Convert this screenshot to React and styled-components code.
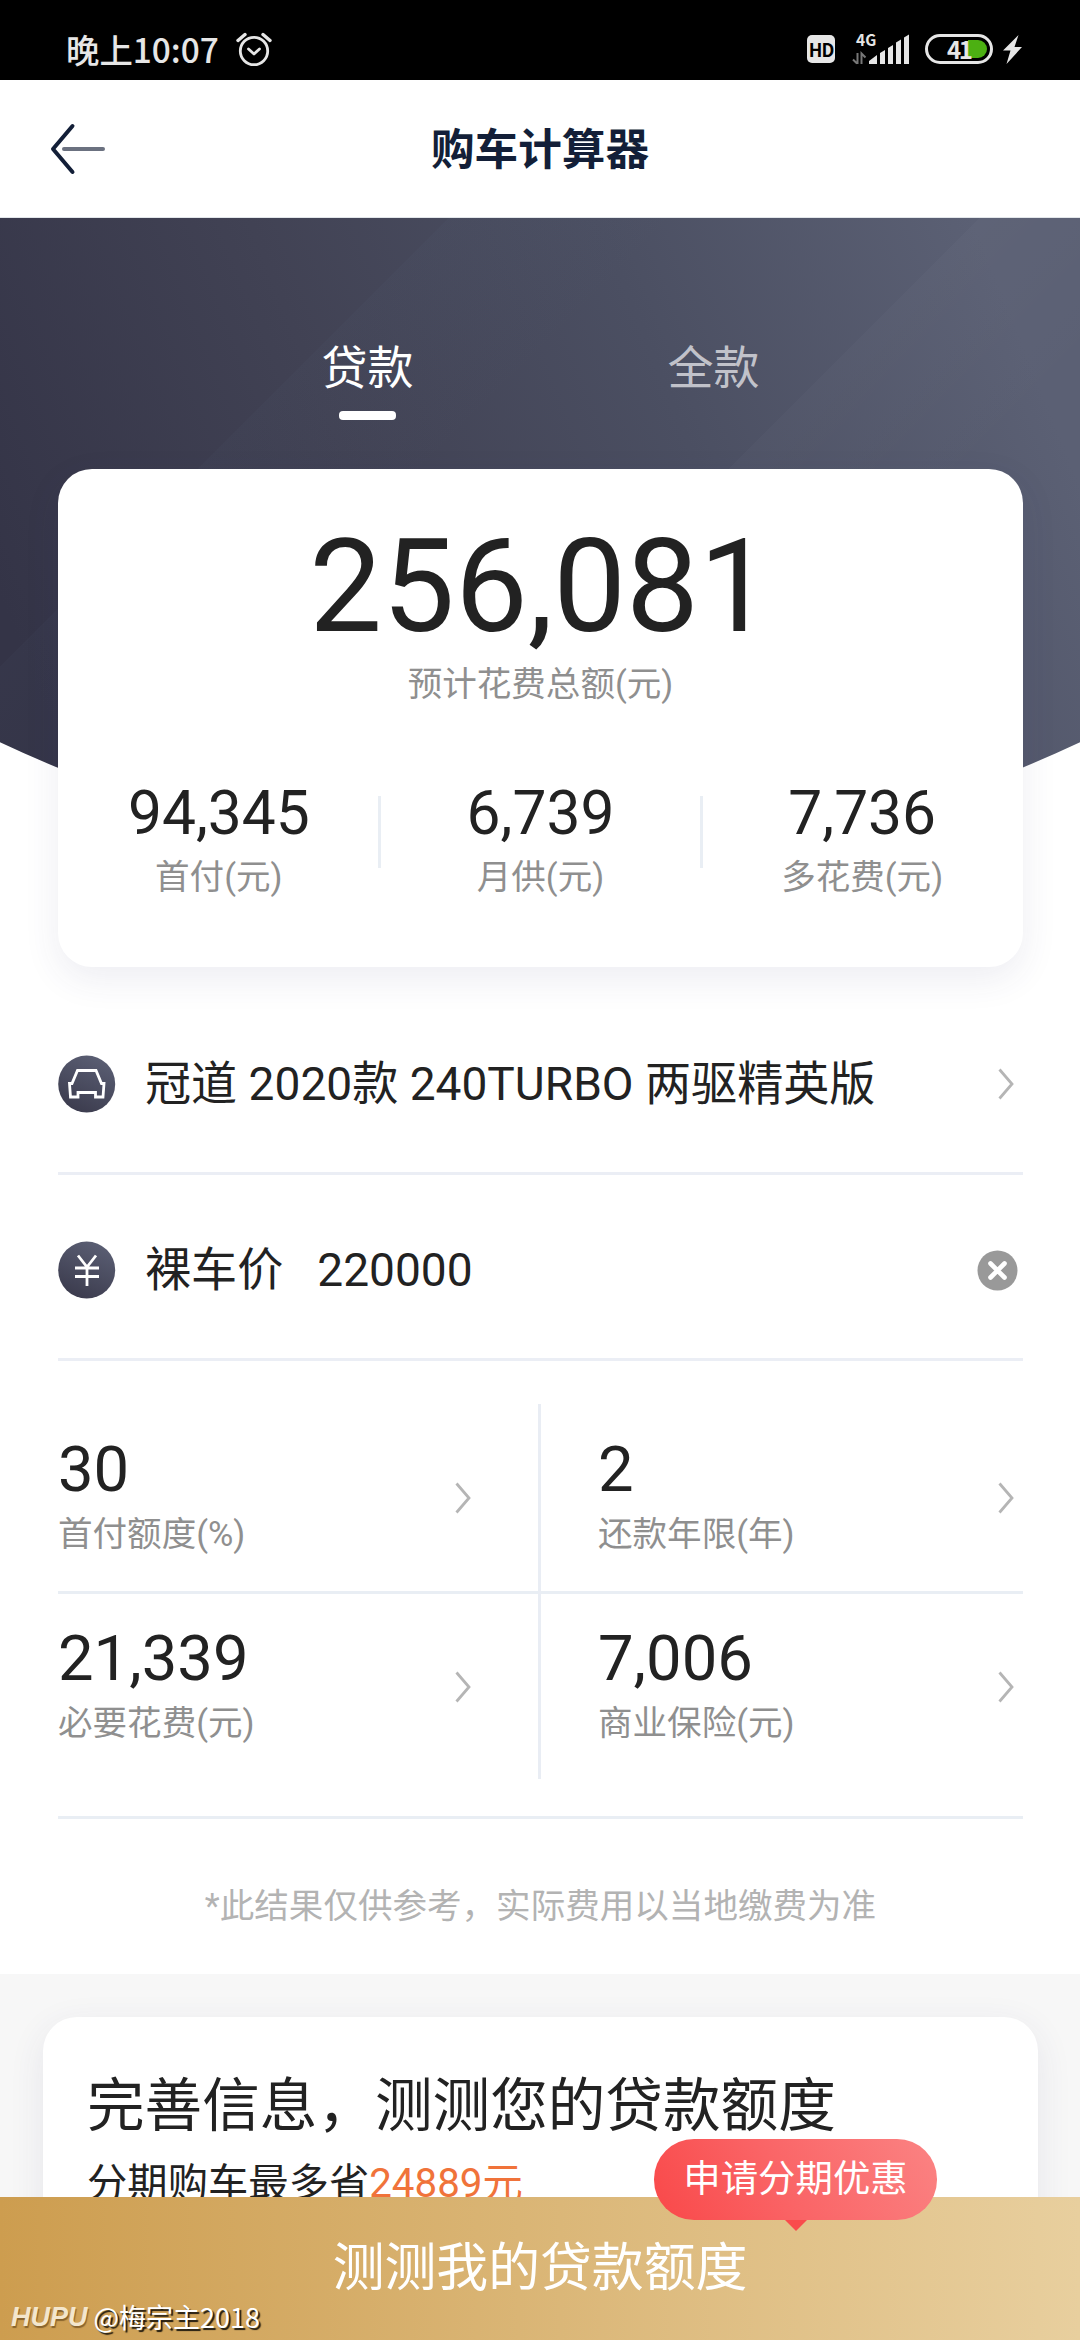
import styled, { createGlobalStyle } from "styled-components";

const GlobalStyle = createGlobalStyle`
  * {
    box-sizing: border-box;
  }
  body {
    margin: 0;
    background: #fff;
    font-family: Roboto, "Noto Sans CJK SC", sans-serif;
    color: #222;
  }
  h1, h2, p {
    margin: 0;
    font-weight: 400;
  }
  svg {
    display: block;
    flex: none;
  }
`;

const Page = styled.main`
  width: 1080px;
  height: 2340px;
  display: flex;
  flex-direction: column;
  overflow: hidden;
  position: relative;
`;

const StatusBar = styled.header`
  height: 80px;
  flex: none;
  background: #000;
  color: #e6e6e6;
  display: flex;
  align-items: center;
  padding: 18px 58px 0 66px;
  font-family: "Noto Sans CJK SC", sans-serif;
  .time {
    font-size: 33.4px;
    font-weight: 500;
    line-height: 40px;
    margin-right: 17px;
  }
  .hd {
    width: 28px;
    height: 28px;
    border-radius: 5px;
    background: #e6e6e6;
    color: #000;
    font-size: 18px;
    font-weight: 700;
    line-height: 28px;
    text-align: center;
    letter-spacing: -1px;
    margin: 0 17px 0 auto;
  }
  .battery {
    width: 68px;
    height: 30px;
    border: 3px solid #e6e6e6;
    border-radius: 15px;
    margin: 0 10px 0 16px;
    padding: 3px;
    display: flex;
    justify-content: flex-end;
    position: relative;
    i {
      width: 19px;
      height: 18px;
      background: #4cb012;
      border-radius: 0 9px 9px 0;
    }
    span {
      position: absolute;
      left: 19px;
      top: -1px;
      font-size: 24px;
      font-weight: 700;
      line-height: 25px;
      letter-spacing: -2.5px;
    }
  }
`;

const NavBar = styled.nav`
  height: 138px;
  flex: none;
  border-bottom: 1px solid #e2e6ea;
  display: grid;
  grid-template-columns: 1fr auto 1fr;
  align-items: center;
  padding: 0 50px;
  h1 {
    color: #131f38;
    font-size: 43.6px;
    line-height: 60px;
    font-weight: 700;
    padding-top: 4px;
  }
`;

const Scroll = styled.div`
  flex: 1;
  min-height: 0;
  overflow: hidden;
`;

const Hero = styled.section`
  position: relative;
  padding: 0 57px 0 58px;
`;

// dark backdrop, cut to an arc at its lower edge
const Backdrop = styled.div`
  position: absolute;
  inset: 0 0 auto 0;
  height: 645px;
  clip-path: circle(1268px at 50% -623px);
  background:
    linear-gradient(135deg, transparent 56.8%, rgba(255, 255, 255, 0.02) 56.8%, transparent 72%),
    linear-gradient(135deg, transparent 26%, rgba(120, 150, 180, 0.03) 26%, transparent 40%),
    linear-gradient(68deg, #343447 8%, #414254 38%, #4b4f62 64%, #5b6074 92%);
`;

const Tabs = styled.div`
  position: relative;
  display: flex;
  justify-content: center;
  height: 251px;
  padding-top: 120px;
`;

const Tab = styled.div`
  width: 346px;
  display: flex;
  flex-direction: column;
  align-items: center;
  gap: 13px;
  font-size: 46px;
  line-height: 60px;
  color: ${(p) => (p.$active ? "#fff" : "#c1c2ca")};
  &::after {
    content: "";
    width: 57px;
    height: 9px;
    border-radius: 4px;
    background: ${(p) => (p.$active ? "#fff" : "transparent")};
  }
`;

const SummaryCard = styled.div`
  position: relative;
  height: 498px;
  border-radius: 34px;
  background: #fff;
  box-shadow: 0 12px 36px rgba(60, 60, 110, 0.09);
  padding-top: 53px;
  .total {
    font-size: 129.6px;
    line-height: 130px;
    text-align: center;
    margin-bottom: 8px;
  }
`;

const Label = styled.p`
  font-size: 34.56px;
  line-height: 48px;
  color: #8f8f8f;
  text-align: ${(p) => (p.$center ? "center" : "left")};
`;

const Stats = styled.div`
  display: flex;
  margin-top: 75px;
`;

const Stat = styled.div`
  flex: 1;
  text-align: center;
  .num {
    font-size: 60.48px;
    line-height: 62px;
    margin-bottom: 8px;
  }
`;

const StatDivider = styled.div`
  width: 3px;
  height: 72px;
  margin: 13px -1.5px 0;
  background: #e9eef4;
`;

const Form = styled.section`
  padding: 22px 57px 0 58px;
`;

const Row = styled.div`
  height: 186px;
  border-bottom: 3px solid #ebeef5;
  padding: 7px ${(p) => (p.$clearable ? 5 : 9)}px 0 0;
  display: flex;
  align-items: center;
  font-size: 46.08px;
  line-height: 60px;
  white-space: pre;
  .title {
    margin-left: 29px;
  }
  .value {
    margin-left: 34px;
  }
  svg:last-child {
    margin-left: auto;
  }
`;

const Grid = styled.div`
  display: grid;
  grid-template-columns: 480px 3px 1fr;
  grid-template-rows: 187px 3px 185px;
  margin: 43px 0 37px;
  .vline {
    grid-area: 1 / 2 / 4 / 3;
    background: #e9edf4;
  }
  .hline {
    grid-area: 2 / 1 / 3 / 4;
    background: #e9eef4;
  }
`;

const Cell = styled.div`
  grid-column: ${(p) => (p.$right ? 3 : 1)};
  grid-row: ${(p) => (p.$bottom ? 3 : 1)};
  display: flex;
  align-items: center;
  justify-content: space-between;
  padding: ${(p) => (p.$right ? "0 9px 0 57px" : "0 67px 0 0")};
  .num {
    font-size: 63.36px;
    line-height: 64px;
    margin-bottom: 9px;
  }
`;

const Note = styled.p`
  height: 158px;
  border-top: 3px solid #e9eef4;
  padding-top: 63px;
  font-size: 34.56px;
  line-height: 48px;
  text-align: center;
  color: #b3b3b3;
`;

const Promo = styled.section`
  background: #f7f7f7;
  padding: 43px 42px 0 43px;
  height: 300px;
  article {
    height: 400px;
    border-radius: 34px;
    background: #fff;
    box-shadow: 0 10px 36px rgba(60, 60, 110, 0.09);
    padding: 55px 44px 0;
  }
  h2 {
    font-size: 57.6px;
    line-height: 70px;
    margin-bottom: 18px;
  }
  p {
    font-size: 40.32px;
    line-height: 48px;
  }
  em {
    font-style: normal;
    color: #f0733a;
  }
`;

const ApplyButton = styled.div`
  position: relative;
  height: 143px;
  flex: none;
  background: linear-gradient(90deg, #cd9d4f, #e8cf9e);
  color: #fff;
  font-size: 51.84px;
  line-height: 64px;
  display: flex;
  align-items: center;
  justify-content: center;
`;

const Badge = styled.div`
  position: absolute;
  left: 654px;
  top: -58px;
  width: 283px;
  height: 81px;
  border-radius: 40px;
  background: linear-gradient(60deg, #f94b4c 5%, #fa6466 45%, #fb8383);
  font-size: 37.44px;
  line-height: 80px;
  text-align: center;
  &::after {
    content: "";
    position: absolute;
    left: 131px;
    top: 81px;
    border: 11px solid transparent;
    border-top-color: #f94b4c;
    border-bottom: 0;
  }
`;

const Watermark = styled.div`
  position: absolute;
  left: 11px;
  bottom: 4px;
  display: flex;
  align-items: center;
  gap: 6px;
  font: 400 27px/38px "Noto Sans CJK SC", sans-serif;
  text-shadow: 2px 2px 1px rgba(0, 0, 0, 0.85);
  b {
    font: italic 700 27px/38px "Liberation Sans", sans-serif;
    color: #f3e6cd;
    text-shadow: 1px 2px 1px rgba(90, 60, 20, 0.6);
  }
`;

const Chevron = () => (
  <svg width="16" height="34" viewBox="0 0 16 34" fill="none">
    <path d="M1.5 2.5 14 17 1.5 31.5" stroke="#b5b5b5" strokeWidth="2.8" />
  </svg>
);

const AlarmIcon = () => (
  <svg width="36" height="36" viewBox="0 0 36 36" fill="none" stroke="#e6e6e6" strokeWidth="2.8" strokeLinecap="round">
    <circle cx="18" cy="20" r="13.7" />
    <path d="m12.5 18 5.5 5 5.5-5" strokeLinejoin="round" />
    <path d="M2 9.5 9 3.5M34 9.5l-7-6" strokeWidth="3.4" />
  </svg>
);

const SignalIcon = () => (
  <svg width="57" height="44" viewBox="0 -6 57 44" fill="#e6e6e6">
    <text x="4" y="12.5" fontSize="15.5" fontWeight="700" fontFamily="Noto Sans CJK SC">4G</text>
    <path d="M5.5 20v11M5 30.5 1 26.5M9.5 31V20.5l4 4" stroke="#777" strokeWidth="2" fill="none" />
    <path d="M17 31v-3l8-6v9zM28 31V20l5-3v14zM36 31V15l5-3v19zM44 31V9.5l5-3V31zM52 31V4.5l5-3V31z" />
  </svg>
);

const BoltIcon = () => (
  <svg width="19" height="30" viewBox="0 0 19 30" fill="#e6e6e6">
    <path d="M15.5 1 0 16.5h7.5L3.5 30 19 13h-7.5z" />
  </svg>
);

const BackIcon = () => (
  <svg width="56" height="52" viewBox="0 0 56 52" fill="none" strokeWidth="4" strokeLinecap="round">
    <path d="M14 26h39" stroke="#6b7180" />
    <path d="M22.5 3 3 26l19.5 23" stroke="#131f38" strokeLinejoin="round" />
  </svg>
);

const RoundIcon = ({ id, d }) => (
  <svg width="58" height="58" viewBox="0 0 58 58" fill="none">
    <defs>
      <linearGradient id={id} x1="0.75" y1="0" x2="0.3" y2="1">
        <stop stopColor="#5b5f74" />
        <stop offset="1" stopColor="#3b3b4d" />
      </linearGradient>
    </defs>
    <circle cx="28.7" cy="29" r="28.5" fill={`url(#${id})`} />
    <path d={d} stroke="#fff" strokeWidth="2.8" />
  </svg>
);

const ClearIcon = () => (
  <svg width="41" height="41" viewBox="0 0 41 41">
    <circle cx="20.5" cy="20.5" r="20" fill="#999" />
    <path d="m13.5 13.5 14 14m0-14-14 14" stroke="#fff" strokeWidth="4.6" strokeLinecap="round" />
  </svg>
);

const stats = [
  { num: "94,345", label: "首付(元)" },
  { num: "6,739", label: "月供(元)" },
  { num: "7,736", label: "多花费(元)" },
];

const cells = [
  { num: "30", label: "首付额度(%)" },
  { num: "2", label: "还款年限(年)", right: true },
  { num: "21,339", label: "必要花费(元)", bottom: true },
  { num: "7,006", label: "商业保险(元)", right: true, bottom: true },
];

const App = () => {
  return (
    <Page>
      <GlobalStyle />
      <StatusBar>
        <span className="time">晚上10:07</span>
        <AlarmIcon />
        <span className="hd">HD</span>
        <SignalIcon />
        <div className="battery">
          <i />
          <span>41</span>
        </div>
        <BoltIcon />
      </StatusBar>
      <NavBar>
        <BackIcon />
        <h1>购车计算器</h1>
      </NavBar>
      <Scroll>
        <Hero>
          <Backdrop />
          <Tabs>
            <Tab $active>贷款</Tab>
            <Tab>全款</Tab>
          </Tabs>
          <SummaryCard>
            <p className="total">256,081</p>
            <Label $center>预计花费总额(元)</Label>
            <Stats>
              {stats.map((s, i) => [
                i > 0 && <StatDivider key={`d${i}`} />,
                <Stat key={s.label}>
                  <p className="num">{s.num}</p>
                  <Label $center>{s.label}</Label>
                </Stat>,
              ])}
            </Stats>
          </SummaryCard>
        </Hero>
        <Form>
          <Row>
            <RoundIcon id="car" d="M19.5 15.5h18.5l5.5 13h2.5L45 42h-7.500v-4.500h-17.500v4.500h-7.500L11.500 28.500h2.500z" />
            <span className="title">冠道 2020款 240TURBO 两驱精英版</span>
            <Chevron />
          </Row>
          <Row $clearable>
            <RoundIcon id="yen" d="M20 14.500 29 26l9-11.500M29 26v19M17 27h24M17 35.500h24" />
            <span className="title">裸车价</span>
            <span className="value">220000</span>
            <ClearIcon />
          </Row>
          <Grid>
            <div className="hline" />
            <div className="vline" />
            {cells.map((c) => (
              <Cell key={c.label} $right={c.right} $bottom={c.bottom}>
                <div>
                  <p className="num">{c.num}</p>
                  <Label>{c.label}</Label>
                </div>
                <Chevron />
              </Cell>
            ))}
          </Grid>
          <Note>*此结果仅供参考，实际费用以当地缴费为准</Note>
        </Form>
        <Promo>
          <article>
            <h2>完善信息，测测您的贷款额度</h2>
            <p>
              分期购车最多省<em>24889元</em>
            </p>
          </article>
        </Promo>
      </Scroll>
      <ApplyButton>
        测测我的贷款额度
        <Badge>申请分期优惠</Badge>
        <Watermark>
          <b>HUPU</b>
          <span>@梅宗主2018</span>
        </Watermark>
      </ApplyButton>
    </Page>
  );
};

export default App;
